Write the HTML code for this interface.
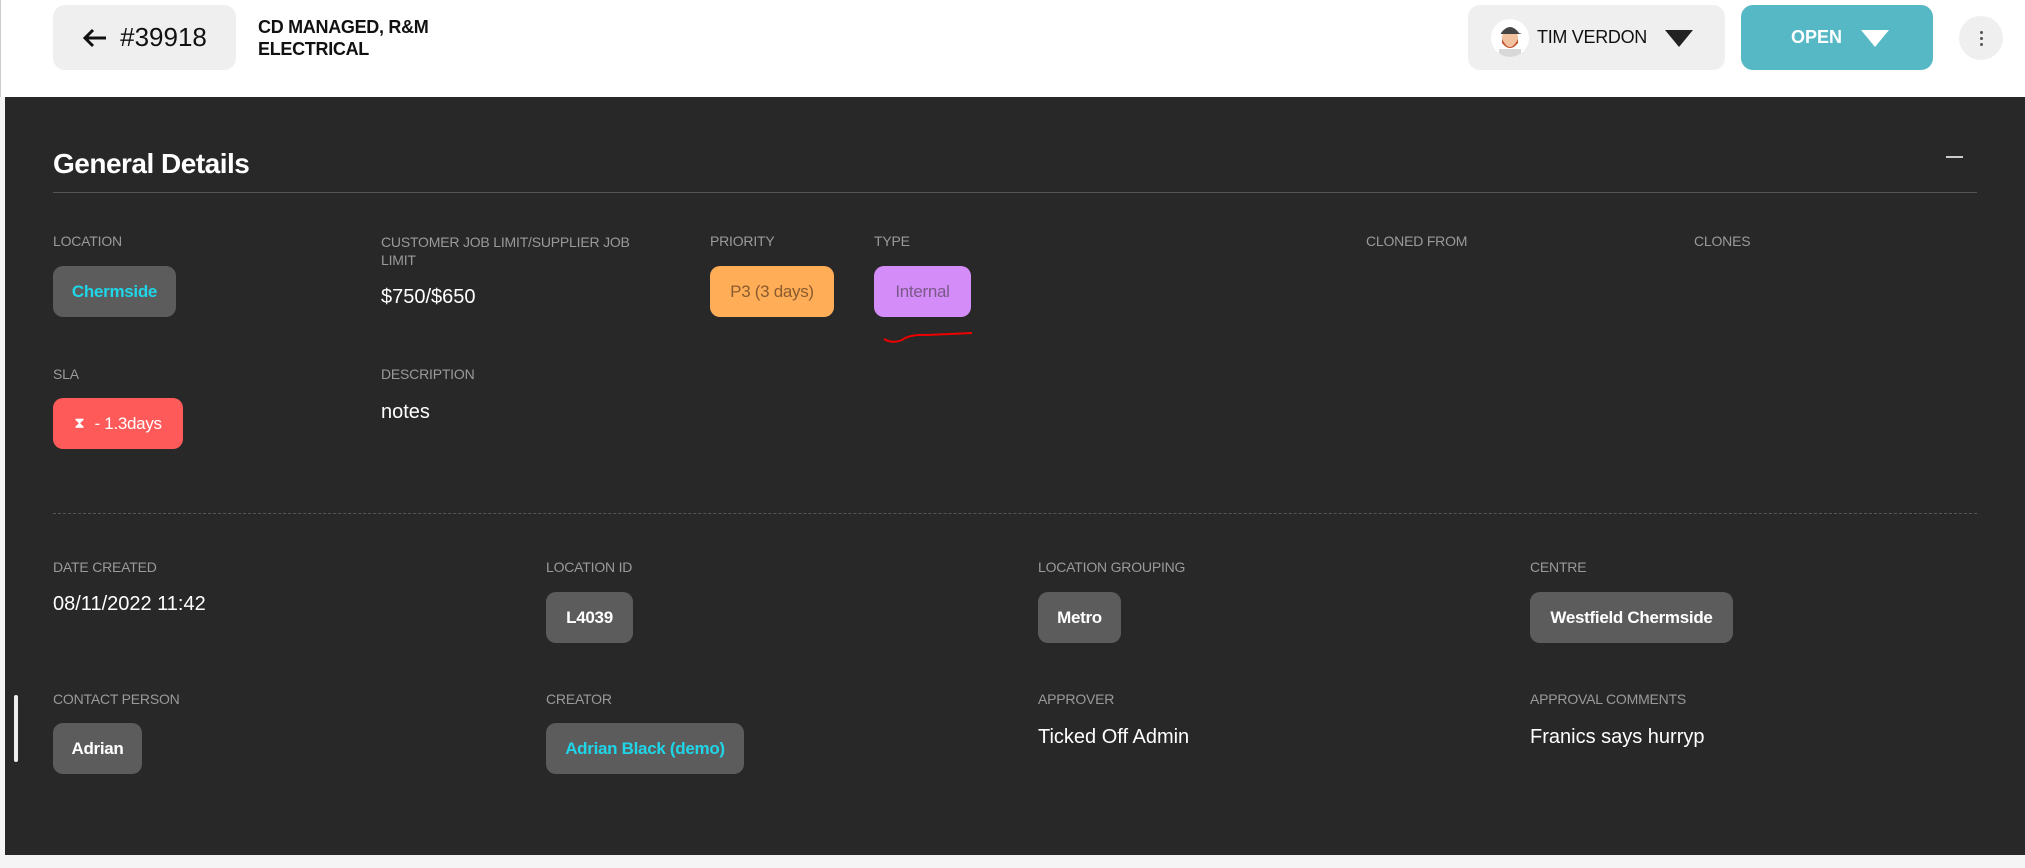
<!DOCTYPE html>
<html><head><meta charset="utf-8"><style>
*{margin:0;padding:0;box-sizing:border-box}
body{width:2025px;height:868px;position:relative;background:#f5f5f5;font-family:"Liberation Sans",sans-serif;overflow:hidden}
.a{position:absolute}
.hdr{left:0;top:0;width:2025px;height:97px;background:#fff;border-left:1px solid #ccc}
.dark{left:5px;top:97px;width:2020px;height:758px;background:#282828}
.lbl{position:absolute;color:#9a9a9a;font-size:14px;letter-spacing:-0.2px}
.val{position:absolute;color:#fff;font-size:20px}
.chip{position:absolute;height:51px;border-radius:10px;background:#5c5c5c;color:#fff;font-size:17px;font-weight:bold;display:flex;align-items:center;justify-content:center;letter-spacing:-0.3px}
</style></head><body>
<div class="a hdr"></div>
<div class="a" style="left:53px;top:5px;width:183px;height:65px;background:#efefef;border-radius:12px;display:flex;align-items:center;justify-content:center;font-size:26px;color:#111;gap:12px">
<svg width="26" height="22" viewBox="0 0 26 22"><path d="M24 11H3M11 3L3 11L11 19" fill="none" stroke="#111" stroke-width="3"/></svg>#39918</div>
<div class="a" style="left:258px;top:16px;font-size:18px;line-height:22px;color:#111;font-weight:bold;letter-spacing:-0.3px">CD MANAGED, R&amp;M<br>ELECTRICAL</div>
<div class="a" style="left:1468px;top:5px;width:257px;height:65px;background:#efefef;border-radius:12px"></div>
<div class="a" style="left:1491px;top:19px;width:38px;height:38px;border-radius:50%;background:#fff;overflow:hidden">
<svg width="38" height="38" viewBox="0 0 38 38"><rect x="8" y="30" width="22" height="10" fill="#d8d8d8"/><ellipse cx="19" cy="19" rx="8" ry="9" fill="#f2c2a0"/><path d="M11 20Q19 36 27 20L27 24Q19 34 11 24Z" fill="#c0502a"/><path d="M10 14Q19 2 28 14L31 15L10 15Z" fill="#444"/></svg></div>
<div class="a" style="left:1537px;top:27px;font-size:18px;color:#111;letter-spacing:-0.3px">TIM VERDON</div>
<svg class="a" style="left:1665px;top:30px" width="28" height="17"><path d="M0 0H28L14 17Z" fill="#222"/></svg>
<div class="a" style="left:1741px;top:5px;width:192px;height:65px;background:#55b8c4;border-radius:12px"></div>
<div class="a" style="left:1791px;top:27px;font-size:18px;color:#fff;font-weight:bold">OPEN</div>
<svg class="a" style="left:1861px;top:30px" width="28" height="17"><path d="M0 0H28L14 17Z" fill="#fff"/></svg>
<div class="a" style="left:1959px;top:16px;width:44px;height:44px;border-radius:50%;background:#efefef"></div>
<div class="a" style="left:1980px;top:31px;width:3px;height:3px;border-radius:50%;background:#555;box-shadow:0 6px 0 #555,0 12px 0 #555"></div>
<div class="a dark"></div>
<div class="a" style="left:53px;top:148px;font-size:28px;font-weight:bold;color:#fff;letter-spacing:-0.5px">General Details</div>
<div class="a" style="left:1946px;top:156px;width:17px;height:2px;background:#ccc"></div>
<div class="a" style="left:53px;top:192px;width:1924px;height:1px;background:#555"></div>
<div class="lbl" style="left:53px;top:233px">LOCATION</div>
<div class="lbl" style="left:381px;top:233px;line-height:18px">CUSTOMER JOB LIMIT/SUPPLIER JOB<br>LIMIT</div>
<div class="lbl" style="left:710px;top:233px">PRIORITY</div>
<div class="lbl" style="left:874px;top:233px">TYPE</div>
<div class="lbl" style="left:1366px;top:233px">CLONED FROM</div>
<div class="lbl" style="left:1694px;top:233px">CLONES</div>
<div class="chip" style="left:53px;top:266px;width:123px;color:#1fd6e8">Chermside</div>
<div class="val" style="left:381px;top:286px">$750/$650</div>
<div class="chip" style="left:710px;top:266px;width:124px;background:#ffad57;color:#8a5b2e;font-weight:normal">P3 (3 days)</div>
<div class="chip" style="left:874px;top:266px;width:97px;background:#d48cf8;color:#7a5a88;font-weight:normal">Internal</div>
<svg class="a" style="left:882px;top:330px" width="92" height="14"><path d="M2 9Q10 14 20 10Q28 4 45 5L90 3" fill="none" stroke="#e00" stroke-width="2"/></svg>
<div class="lbl" style="left:53px;top:366px">SLA</div>
<div class="lbl" style="left:381px;top:366px">DESCRIPTION</div>
<div class="chip" style="left:53px;top:398px;width:130px;background:#ff5a5a;font-weight:normal;gap:10px"><span style="font-size:15px">⧗</span>- 1.3days</div>
<div class="val" style="left:381px;top:401px">notes</div>
<div class="a" style="left:53px;top:513px;width:1924px;border-top:1px dashed #555"></div>
<div class="lbl" style="left:53px;top:559px">DATE CREATED</div>
<div class="lbl" style="left:546px;top:559px">LOCATION ID</div>
<div class="lbl" style="left:1038px;top:559px">LOCATION GROUPING</div>
<div class="lbl" style="left:1530px;top:559px">CENTRE</div>
<div class="val" style="left:53px;top:593px">08/11/2022 11:42</div>
<div class="chip" style="left:546px;top:592px;width:87px">L4039</div>
<div class="chip" style="left:1038px;top:592px;width:83px">Metro</div>
<div class="chip" style="left:1530px;top:592px;width:203px">Westfield Chermside</div>
<div class="lbl" style="left:53px;top:691px">CONTACT PERSON</div>
<div class="lbl" style="left:546px;top:691px">CREATOR</div>
<div class="lbl" style="left:1038px;top:691px">APPROVER</div>
<div class="lbl" style="left:1530px;top:691px">APPROVAL COMMENTS</div>
<div class="chip" style="left:53px;top:723px;width:89px">Adrian</div>
<div class="chip" style="left:546px;top:723px;width:198px;color:#1fd6e8">Adrian Black (demo)</div>
<div class="val" style="left:1038px;top:726px">Ticked Off Admin</div>
<div class="val" style="left:1530px;top:726px">Franics says hurryp</div>
<div class="a" style="left:14px;top:695px;width:4px;height:67px;border-radius:2px;background:#eee"></div>
</body></html>
